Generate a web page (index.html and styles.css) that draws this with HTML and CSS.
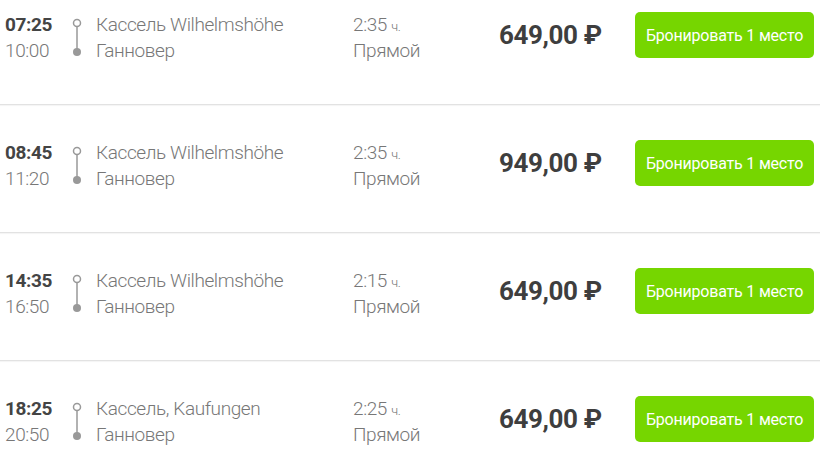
FILE: index.html
```html
<!DOCTYPE html>
<html lang="ru">

<head>
    <meta charset="UTF-8">
    <meta name="viewport" content="width=device-width, initial-scale=1.0">
    <title>Рейсы</title>
    <link rel="stylesheet" href="styles.css">
</head>

<body>
    <div class="trip-list">
        <div class="trip">
            <div class="times"><b>07:25</b><span>10:00</span></div>
            <div class="route-line">
                <svg width="10" height="40" viewBox="0 0 10 40">
                    <circle cx="5" cy="6" r="3.5" fill="#fff" stroke="#999" stroke-width="1.5"></circle>
                    <line x1="5" y1="9.5" x2="5" y2="33" stroke="#999" stroke-width="1.5"></line>
                    <circle cx="5" cy="35" r="4" fill="#999"></circle>
                </svg>
            </div>
            <div class="stations"><span>Кассель Wilhelmshöhe</span><span>Ганновер</span></div>
            <div class="duration"><span>2:35 <small>ч.</small></span><span>Прямой</span></div>
            <div class="price">649,00 ₽</div>
            <button class="book-btn">Бронировать 1 место</button>
        </div>
        <div class="trip">
            <div class="times"><b>08:45</b><span>11:20</span></div>
            <div class="route-line">
                <svg width="10" height="40" viewBox="0 0 10 40">
                    <circle cx="5" cy="6" r="3.5" fill="#fff" stroke="#999" stroke-width="1.5"></circle>
                    <line x1="5" y1="9.5" x2="5" y2="33" stroke="#999" stroke-width="1.5"></line>
                    <circle cx="5" cy="35" r="4" fill="#999"></circle>
                </svg>
            </div>
            <div class="stations"><span>Кассель Wilhelmshöhe</span><span>Ганновер</span></div>
            <div class="duration"><span>2:35 <small>ч.</small></span><span>Прямой</span></div>
            <div class="price">949,00 ₽</div>
            <button class="book-btn">Бронировать 1 место</button>
        </div>
        <div class="trip">
            <div class="times"><b>14:35</b><span>16:50</span></div>
            <div class="route-line">
                <svg width="10" height="40" viewBox="0 0 10 40">
                    <circle cx="5" cy="6" r="3.5" fill="#fff" stroke="#999" stroke-width="1.5"></circle>
                    <line x1="5" y1="9.5" x2="5" y2="33" stroke="#999" stroke-width="1.5"></line>
                    <circle cx="5" cy="35" r="4" fill="#999"></circle>
                </svg>
            </div>
            <div class="stations"><span>Кассель Wilhelmshöhe</span><span>Ганновер</span></div>
            <div class="duration"><span>2:15 <small>ч.</small></span><span>Прямой</span></div>
            <div class="price">649,00 ₽</div>
            <button class="book-btn">Бронировать 1 место</button>
        </div>
        <div class="trip">
            <div class="times"><b>18:25</b><span>20:50</span></div>
            <div class="route-line">
                <svg width="10" height="40" viewBox="0 0 10 40">
                    <circle cx="5" cy="6" r="3.5" fill="#fff" stroke="#999" stroke-width="1.5"></circle>
                    <line x1="5" y1="9.5" x2="5" y2="33" stroke="#999" stroke-width="1.5"></line>
                    <circle cx="5" cy="35" r="4" fill="#999"></circle>
                </svg>
            </div>
            <div class="stations"><span>Кассель, Kaufungen</span><span>Ганновер</span></div>
            <div class="duration"><span>2:25 <small>ч.</small></span><span>Прямой</span></div>
            <div class="price">649,00 ₽</div>
            <button class="book-btn">Бронировать 1 место</button>
        </div>
    </div>
</body>

</html>
```

FILE: styles.css
```css
body {
    font-family: 'Roboto', sans-serif;
    background-color: #ffffff;
    color: #777777;
    margin: 0;
    overflow: hidden;
}

/* список как будто прокручен немного вниз */
.trip-list {
    margin-top: -23px;
}

.trip {
    display: grid;
    grid-template-columns: 67px 24px 257px 146px 136px 179px;
    align-items: start;
    height: 128px;
    box-sizing: border-box;
    padding: 35px 6px 0 5px;
    border-bottom: 1px solid #e2e2e2;
    box-shadow: 0 1px 1px rgba(0, 0, 0, 0.04);
}

.times,
.stations,
.duration {
    display: flex;
    flex-direction: column;
    font-size: 19px;
    line-height: 26px;
    font-weight: 300;
    letter-spacing: -0.4px;
    white-space: nowrap;
}

.times b {
    font-weight: 700;
    color: #444444;
}

.duration small {
    font-size: 13px;
    line-height: 0;
}

.route-line {
    padding-top: 5px;
}

.route-line svg {
    display: block;
}

.price {
    font-size: 26px;
    font-weight: 700;
    line-height: 52px;
    letter-spacing: -0.4px;
    margin-top: -3px;
    color: #3e3e3e;
    white-space: nowrap;
}

.book-btn {
    margin-top: 0;
    height: 46px;
    border: none;
    border-radius: 5px;
    background-color: #76d600;
    color: #ffffff;
    font-family: inherit;
    font-size: 16px;
    letter-spacing: -0.2px;
    padding: 0;
    cursor: pointer;
}
```
